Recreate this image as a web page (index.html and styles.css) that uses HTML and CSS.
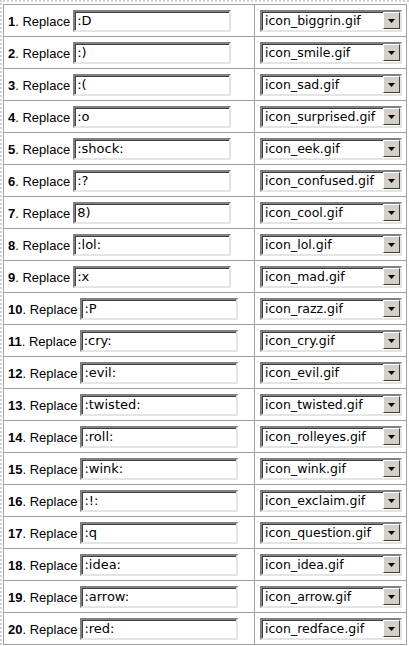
FILE: index.html
```html
<!DOCTYPE html>
<html>
<head>
<meta charset="utf-8">
<link rel="stylesheet" href="styles.css">
</head>
<body>
<div class="wrap">
<table class="tbl">
<tbody id="rows"></tbody>
</table>
</div>
<script>
var data = [
[":D","icon_biggrin.gif"],[":)","icon_smile.gif"],[":(","icon_sad.gif"],[":o","icon_surprised.gif"],
[":shock:","icon_eek.gif"],[":?","icon_confused.gif"],["8)","icon_cool.gif"],[":lol:","icon_lol.gif"],
[":x","icon_mad.gif"],[":P","icon_razz.gif"],[":cry:","icon_cry.gif"],[":evil:","icon_evil.gif"],
[":twisted:","icon_twisted.gif"],[":roll:","icon_rolleyes.gif"],[":wink:","icon_wink.gif"],[":!:","icon_exclaim.gif"],
[":q","icon_question.gif"],[":idea:","icon_idea.gif"],[":arrow:","icon_arrow.gif"],[":red:","icon_redface.gif"]
];
var tb = document.getElementById('rows');
data.forEach(function(d,i){
  var tr = document.createElement('tr');
  tr.innerHTML = '<td class="c1"><span class="lbl"><b>'+(i+1)+'</b>. Replace</span><span class="inp">'+d[0]+'</span></td>'+
   '<td class="c2"><span class="sel"><span class="selt">'+d[1]+'</span><span class="btn"><svg width="7" height="4" viewBox="0 0 7 4"><path d="M0 0h7L3.5 4z" fill="#000"/></svg></span></span></td>';
  tb.appendChild(tr);
});
</script>
</body>
</html>
```
FILE: styles.css
```css
html, body { margin: 0; padding: 0; background: #fff; }
body { width: 409px; height: 646px; overflow: hidden; }
.wrap {
  border-top: 2px dotted #d0d0d0;
  border-left: 2px dotted #d0d0d0;
  padding: 2px 0 0 1px;
}
.tbl {
  border-collapse: collapse;
}
.tbl td {
  border: 1px solid #a0a0a0;
  height: 32px;
  padding: 0;
  vertical-align: middle;
  box-sizing: border-box;
}
.c1 { width: 251px; white-space: nowrap; padding-left: 4px !important; }
.c2 { width: 152px; padding-left: 5px !important; }
.lbl {
  font-family: "Liberation Sans", Arial, sans-serif;
  font-size: 13px;
  color: #000;
  vertical-align: middle;
}
.lbl b { font-weight: bold; }
.inp {
  display: inline-block;
  vertical-align: middle;
  margin-left: 3px;
  width: 152px;
  height: 18px;
  border-style: solid;
  border-width: 2px;
  border-color: #808080 #e4e4e4 #e4e4e4 #808080;
  box-shadow: inset 1px 1px 0 #404040;
  font-family: "DejaVu Sans", Verdana, sans-serif;
  font-size: 13px;
  line-height: 18px;
  padding-left: 2px;
  box-sizing: content-box;
  color: #000;
}
.sel {
  display: flex;
  align-items: center;
  width: 138px;
  height: 18px;
  border-style: solid;
  border-width: 2px;
  border-color: #808080 #e4e4e4 #e4e4e4 #808080;
  box-shadow: inset 1px 1px 0 #404040;
  font-family: "DejaVu Sans", Verdana, sans-serif;
  font-size: 12.5px;
  color: #000;
}
.selt { flex: 1; padding-left: 3px; white-space: nowrap; overflow: hidden; }
.btn {
  width: 15px;
  height: 15px;
  margin-right: 0;
  background: #d4d0c8;
  border: 1px solid;
  border-color: #fff #404040 #404040 #fff;
  display: flex;
  align-items: center;
  justify-content: center;
}
```
